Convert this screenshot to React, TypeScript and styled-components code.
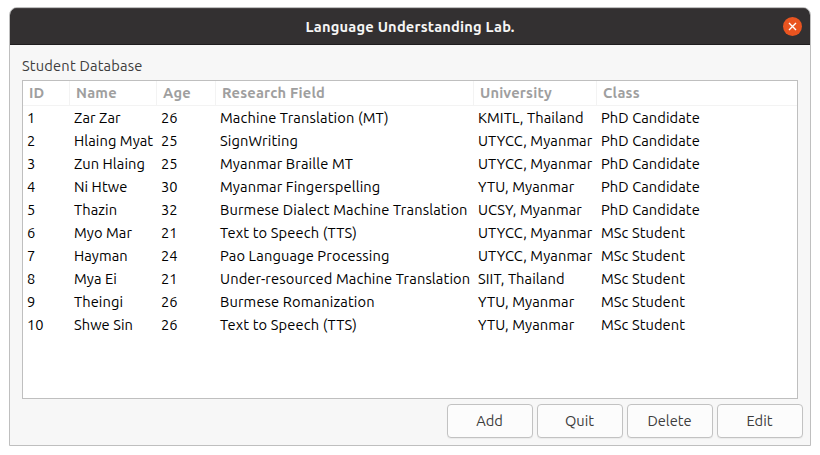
import React from "react";
import styled, { createGlobalStyle } from "styled-components";

const GlobalStyle = createGlobalStyle`
  *, *::before, *::after { box-sizing: border-box; }
  body {
    margin: 0;
    background: #fff;
    color: #3d3d3d;
    font-family: Ubuntu, "Noto Sans", sans-serif;
    font-size: 14.667px;
    overflow: hidden;
  }
`;

const Desktop = styled.div`
  height: 455px;
  padding: 7px 9px 9px;
`;

const Window = styled.main`
  display: flex;
  flex-direction: column;
  width: 802px;
  height: 439px;
  border: 1px solid #bfbfbf;
  border-radius: 8px 8px 0 0;
  background: #f7f7f7;
  overflow: hidden;
`;

const TitleBar = styled.header`
  display: grid;
  grid-template-columns: 36px 1fr 36px;
  align-items: center;
  height: 37px;
  background: #333031;
  border-top: 1px solid #454243;
  border-bottom: 1px solid #1f1d1e;
`;

const Title = styled.h1`
  grid-column: 2;
  margin: 0;
  text-align: center;
  font-size: 14.667px;
  font-weight: 700;
  line-height: 20px;
  letter-spacing: 0.2px;
  color: #f6f6f5;
`;

const CloseButton = styled.button`
  display: grid;
  place-items: center;
  width: 19px;
  height: 19px;
  margin-left: 8.5px;
  padding: 0;
  border: 0;
  border-radius: 50%;
  background: #e95420;
`;

const Content = styled.section`
  display: flex;
  flex-direction: column;
  flex: 1;
  padding: 11px 12px 0;
`;

const Caption = styled.div`
  height: 24px;
  line-height: 20px;
  letter-spacing: 0.18px;
`;

const TableFrame = styled.div`
  width: 776px;
  height: 319px;
  border: 1px solid #bfbfbf;
  background: #fff;
`;

const columns = "47px 87px 59px 258px 123px 1fr";

const HeaderRow = styled.div`
  display: grid;
  grid-template-columns: ${columns};
  height: 25px;
  border-bottom: 1px solid #f3f3f3;
`;

const HeaderCell = styled.div`
  padding-left: 6px;
  border-right: 1px solid #f3f3f3;
  font-weight: 700;
  line-height: 24px;
  color: #9f9f9f;
  white-space: nowrap;
  letter-spacing: 0.2px;

  &:last-child { border-right: 0; }
`;

const Row = styled.div`
  display: grid;
  grid-template-columns: ${columns};
  height: 23px;
  color: #000;
`;

const Cell = styled.div<{ $tracking: number }>`
  padding-left: 4px;
  line-height: 24px;
  white-space: nowrap;
  letter-spacing: ${({ $tracking }) => $tracking}px;
`;

const Actions = styled.footer`
  display: flex;
  justify-content: flex-end;
  gap: 4px;
  margin: 5px -5px 0 0;
`;

const Button = styled.button`
  width: 86px;
  height: 34px;
  padding: 0 1px 1px 0;
  border: 1px solid #c2c2c2;
  border-radius: 4px;
  background: #fcfcfc;
  box-shadow: 0 1px 1px rgba(0, 0, 0, 0.05);
  font: inherit;
  color: #3d3d3d;
`;

const headings = ["ID", "Name", "Age", "Research Field", "University", "Class"];
const tracking = [0, 0.07, 0, 0.13, 0.09, 0.08];

const students = [
  ["1", "Zar Zar", "26", "Machine Translation (MT)", "KMITL, Thailand", "PhD Candidate"],
  ["2", "Hlaing Myat", "25", "SignWriting", "UTYCC, Myanmar", "PhD Candidate"],
  ["3", "Zun Hlaing", "25", "Myanmar Braille MT", "UTYCC, Myanmar", "PhD Candidate"],
  ["4", "Ni Htwe", "30", "Myanmar Fingerspelling", "YTU, Myanmar", "PhD Candidate"],
  ["5", "Thazin", "32", "Burmese Dialect Machine Translation", "UCSY, Myanmar", "PhD Candidate"],
  ["6", "Myo Mar", "21", "Text to Speech (TTS)", "UTYCC, Myanmar", "MSc Student"],
  ["7", "Hayman", "24", "Pao Language Processing", "UTYCC, Myanmar", "MSc Student"],
  ["8", "Mya Ei", "21", "Under-resourced Machine Translation", "SIIT, Thailand", "MSc Student"],
  ["9", "Theingi", "26", "Burmese Romanization", "YTU, Myanmar", "MSc Student"],
  ["10", "Shwe Sin", "26", "Text to Speech (TTS)", "YTU, Myanmar", "MSc Student"],
];

export default function App() {
  return (
    <Desktop>
      <GlobalStyle />
      <Window>
        <TitleBar>
          <Title>Language Understanding Lab.</Title>
          <CloseButton aria-label="Close">
            <svg width="9" height="9" viewBox="0 0 9 9" stroke="#fff" strokeWidth="1.4">
              <path d="M1 1l7 7M8 1L1 8" />
            </svg>
          </CloseButton>
        </TitleBar>
        <Content>
          <Caption>Student Database</Caption>
          <TableFrame>
            <HeaderRow>
              {headings.map((heading) => (
                <HeaderCell key={heading}>{heading}</HeaderCell>
              ))}
            </HeaderRow>
            {students.map((student) => (
              <Row key={student[0]}>
                {student.map((value, i) => (
                  <Cell key={i} $tracking={tracking[i]}>{value}</Cell>
                ))}
              </Row>
            ))}
          </TableFrame>
          <Actions>
            {["Add", "Quit", "Delete", "Edit"].map((label) => (
              <Button key={label}>{label}</Button>
            ))}
          </Actions>
        </Content>
      </Window>
    </Desktop>
  );
}
